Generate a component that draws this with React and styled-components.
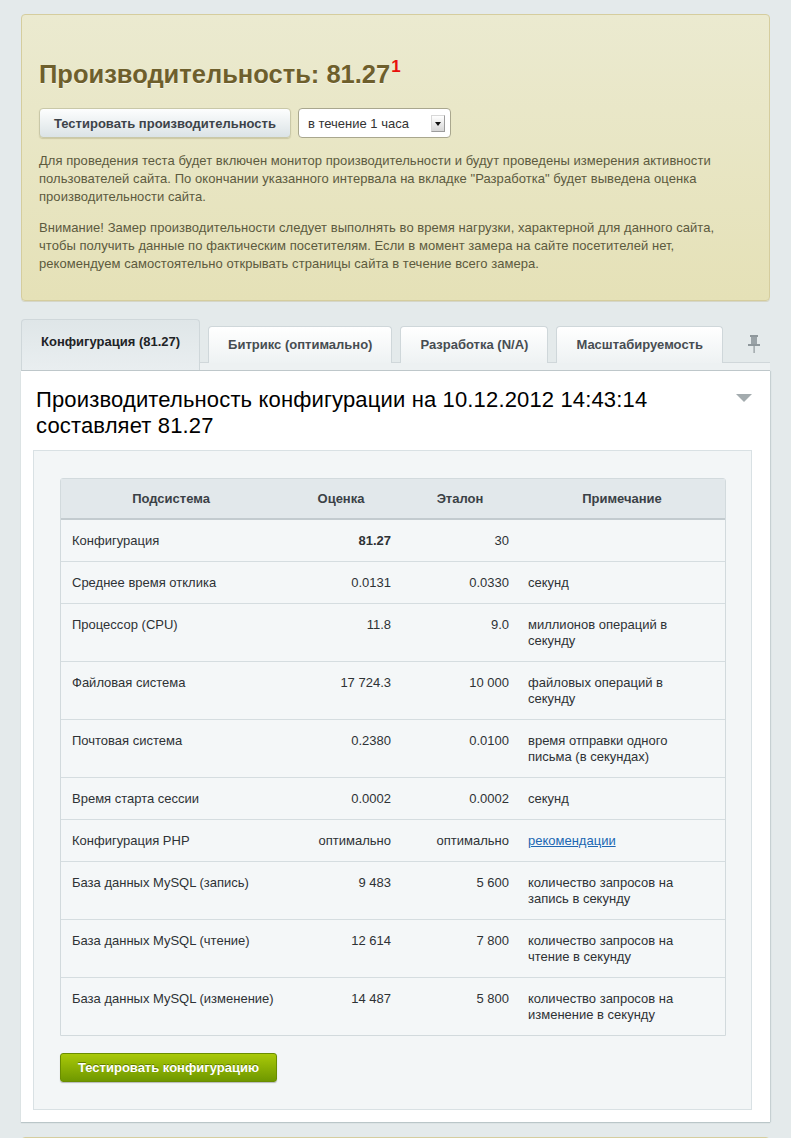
import React from "react"
import styled, { createGlobalStyle } from "styled-components"

const GlobalStyle = createGlobalStyle`
  html, body {
    margin: 0;
    padding: 0;
    background: #e4eaeb;
    font-family: "Liberation Sans", Arial, sans-serif;
  }
`

const rows = [
  { name: "Конфигурация", value: "81.27", bold: true, ref: "30", note: "" },
  { name: "Среднее время отклика", value: "0.0131", ref: "0.0330", note: "секунд" },
  { name: "Процессор (CPU)", value: "11.8", ref: "9.0", note: "миллионов операций в секунду" },
  { name: "Файловая система", value: "17 724.3", ref: "10 000", note: "файловых операций в секунду" },
  { name: "Почтовая система", value: "0.2380", ref: "0.0100", note: "время отправки одного письма (в секундах)" },
  { name: "Время старта сессии", value: "0.0002", ref: "0.0002", note: "секунд" },
  { name: "Конфигурация PHP", value: "оптимально", ref: "оптимально", note: "рекомендации", link: true },
  { name: "База данных MySQL (запись)", value: "9 483", ref: "5 600", note: "количество запросов на запись в секунду" },
  { name: "База данных MySQL (чтение)", value: "12 614", ref: "7 800", note: "количество запросов на чтение в секунду" },
  { name: "База данных MySQL (изменение)", value: "14 487", ref: "5 800", note: "количество запросов на изменение в секунду" },
]

const tabs = [
  { label: "Конфигурация (81.27)", active: true },
  { label: "Битрикс (оптимально)" },
  { label: "Разработка (N/A)" },
  { label: "Масштабируемость" },
]

const App = () => {
  return (
    <Page>
      <GlobalStyle />
      <Notice>
        <Title>
          Производительность: 81.27<Sup>1</Sup>
        </Title>
        <Controls>
          <GrayButton>Тестировать производительность</GrayButton>
          <Select>
            в течение 1 часа
            <SelectArrow />
          </Select>
        </Controls>
        <NoticeText>
          Для проведения теста будет включен монитор производительности и будут проведены измерения активности
          пользователей сайта. По окончании указанного интервала на вкладке "Разработка" будет выведена оценка
          производительности сайта.
        </NoticeText>
        <NoticeText>
          Внимание! Замер производительности следует выполнять во время нагрузки, характерной для данного сайта,
          чтобы получить данные по фактическим посетителям. Если в момент замера на сайте посетителей нет,
          рекомендуем самостоятельно открывать страницы сайта в течение всего замера.
        </NoticeText>
      </Notice>

      <TabBar>
        {tabs.map((t) => (
          <Tab key={t.label} $active={t.active}>
            {t.label}
          </Tab>
        ))}
        <Pin viewBox="0 0 12 18" width="12" height="18">
          <rect x="2" y="0" width="8" height="2" fill="#8f989c" />
          <rect x="3" y="2" width="6" height="7" fill="#9aa3a7" />
          <rect x="0" y="9" width="12" height="2" fill="#8f989c" />
          <rect x="5.5" y="11" width="1.2" height="7" fill="#8f989c" />
        </Pin>
      </TabBar>

      <Content>
        <HeadingRow>
          <Heading>
            Производительность конфигурации на 10.12.2012 14:43:14
            <br />
            составляет 81.27
          </Heading>
          <Collapse />
        </HeadingRow>
        <Box>
          <Table>
            <colgroup>
              <col style={{ width: 220 }} />
              <col style={{ width: 120 }} />
              <col style={{ width: 118 }} />
              <col style={{ width: 206 }} />
            </colgroup>
            <thead>
              <tr>
                <Th>Подсистема</Th>
                <Th>Оценка</Th>
                <Th>Эталон</Th>
                <Th>Примечание</Th>
              </tr>
            </thead>
            <tbody>
              {rows.map((r) => (
                <Row key={r.name}>
                  <NameCell>{r.name}</NameCell>
                  <NumCell $bold={r.bold}>{r.value}</NumCell>
                  <NumCell>{r.ref}</NumCell>
                  <NoteCell>{r.link ? <NoteLink href="#">{r.note}</NoteLink> : r.note}</NoteCell>
                </Row>
              ))}
            </tbody>
          </Table>
          <GreenButton>Тестировать конфигурацию</GreenButton>
        </Box>
      </Content>

      <NextNotice />
    </Page>
  )
}

export default App

const Page = styled.div`
  padding: 14px 21px 0;
  height: 1138px;
  box-sizing: border-box;
  overflow: hidden;
`

const Notice = styled.div`
  background: linear-gradient(to bottom, #ebead0, #e5e1b7);
  border: 1px solid #d5cd9e;
  border-radius: 4px;
  padding: 44px 45px 27px 17px;
  box-shadow: 0 1px 0 rgba(180, 170, 120, 0.3);
`

const Title = styled.h1`
  margin: 0;
  font-size: 25.5px;
  line-height: 30px;
  font-weight: bold;
  color: #6e5f2c;
  text-shadow: 0 1px 0 rgba(255, 255, 255, 0.6);
`

const Sup = styled.sup`
  color: #e8100c;
  font-size: 17px;
  vertical-align: 11px;
  line-height: 0;
  margin-left: 1px;
  text-shadow: none;
`

const Controls = styled.div`
  display: flex;
  gap: 7px;
  margin-top: 19px;
  margin-bottom: 14px;
`

const GrayButton = styled.button`
  height: 30px;
  padding: 0 14px;
  font-family: inherit;
  font-size: 13px;
  font-weight: bold;
  color: #3d4349;
  background: linear-gradient(to bottom, #fdfefe, #dbe3e6);
  border: 1px solid #c9c8a8;
  border-radius: 4px;
  box-shadow: 0 1px 1px rgba(120, 110, 60, 0.25);
`

const Select = styled.div`
  width: 153px;
  height: 30px;
  box-sizing: border-box;
  display: flex;
  align-items: center;
  justify-content: space-between;
  padding: 0 5px 0 9px;
  background: #fff;
  border: 1px solid #a9a78e;
  border-radius: 4px;
  font-size: 13px;
  color: #333;
`

const SelectArrow = styled.span`
  width: 14px;
  height: 17px;
  box-sizing: border-box;
  border: 1px solid #9c9c9c;
  border-top-color: #d8d8d8;
  border-left-color: #d8d8d8;
  background: linear-gradient(to bottom, #ffffff, #d6d6d6);
  position: relative;
  &::after {
    content: "";
    position: absolute;
    left: 3px;
    top: 6px;
    border-left: 3px solid transparent;
    border-right: 3px solid transparent;
    border-top: 4px solid #111;
  }
`

const NoticeText = styled.p`
  margin: 0;
  font-size: 13px;
  line-height: 18px;
  letter-spacing: 0.05px;
  color: #5c5a3e;
  & + & {
    margin-top: 13px;
  }
`

const TabBar = styled.div`
  display: flex;
  align-items: flex-end;
  gap: 8px;
  margin-top: 18px;
  border-bottom: 1px solid #c1cacd;
  background: linear-gradient(
    to bottom,
    transparent 0,
    transparent calc(100% - 8px),
    #d0d7da calc(100% - 8px),
    #d0d7da calc(100% - 7px),
    #edf1f2 calc(100% - 7px)
  );
`

const Tab = styled.div`
  box-sizing: border-box;
  padding: ${(p) => (p.$active ? "14px 19px 0" : "10px 19px 0")};
  height: ${(p) => (p.$active ? "51px" : "37px")};
  margin-bottom: ${(p) => (p.$active ? "0" : "7px")};
  font-size: 13px;
  line-height: 16px;
  font-weight: bold;
  color: ${(p) => (p.$active ? "#1e2326" : "#474d52")};
  background: ${(p) =>
    p.$active
      ? "linear-gradient(to bottom, #dfe6e8, #e9eef0)"
      : "linear-gradient(to bottom, #ffffff, #eef2f3)"};
  border: 1px solid #cfd7da;
  border-bottom: none;
  border-radius: 4px 4px 0 0;
  white-space: nowrap;
`

const Pin = styled.svg`
  margin-left: auto;
  margin-right: 10px;
  align-self: flex-start;
  margin-top: 16px;
`

const Content = styled.div`
  background: #fff;
  padding: 16px 18px 12px 12px;
  box-shadow: 0 1px 1px rgba(150, 165, 170, 0.5), 1px 0 1px rgba(150, 165, 170, 0.3);
`

const HeadingRow = styled.div`
  display: flex;
  justify-content: space-between;
  align-items: flex-start;
  padding-left: 3px;
  margin-bottom: 11px;
`

const Heading = styled.h2`
  margin: 0;
  font-size: 22px;
  line-height: 26px;
  letter-spacing: 0.15px;
  font-weight: normal;
  color: #000;
`

const Collapse = styled.span`
  margin-top: 7px;
  border-left: 8px solid transparent;
  border-right: 8px solid transparent;
  border-top: 8px solid #a3abae;
`

const Box = styled.div`
  background: #f3f6f7;
  border: 1px solid #d9e1e4;
  padding: 27px 27px 27px 26px;
`

const Table = styled.table`
  width: 664px;
  table-layout: fixed;
  border-collapse: separate;
  border-spacing: 0;
  border: 1px solid #d2dadd;
  border-radius: 3px 3px 0 0;
  background: #f4f7f8;
  font-size: 13px;
  color: #2e3235;
`

const Th = styled.th`
  height: 39px;
  padding: 0;
  text-align: center;
  font-weight: bold;
  color: #3b4146;
  background: #e2e8eb;
  border-bottom: 2px solid #c3cbcf;
`

const Row = styled.tr`
  & + & td {
    border-top: 1px solid #d5dde0;
  }
`

const Cell = styled.td`
  padding: 13px 10px 12px;
  line-height: 16px;
  vertical-align: top;
`

const NameCell = styled(Cell)`
  padding-left: 11px;
  padding-right: 0;
  white-space: nowrap;
`

const NumCell = styled(Cell)`
  text-align: right;
  font-weight: ${(p) => (p.$bold ? "bold" : "normal")};
`

const NoteCell = styled(Cell)`
  padding-left: 9px;
  padding-right: 22px;
`

const NoteLink = styled.a`
  color: #2067b3;
  text-decoration: underline;
`

const GreenButton = styled.button`
  margin-top: 17px;
  height: 29px;
  padding: 0 17px;
  font-family: inherit;
  font-size: 13px;
  font-weight: bold;
  color: #fff;
  text-shadow: 0 -1px 0 rgba(60, 80, 0, 0.6);
  background: linear-gradient(to bottom, #a9c908, #6f9800);
  border: 1px solid #6a8d00;
  border-radius: 3px;
  box-shadow: 0 1px 1px rgba(0, 0, 0, 0.25);
`

const NextNotice = styled.div`
  margin-top: 15px;
  height: 40px;
  background: #ebead0;
  border: 1px solid #d5cd9e;
  border-radius: 4px;
`
